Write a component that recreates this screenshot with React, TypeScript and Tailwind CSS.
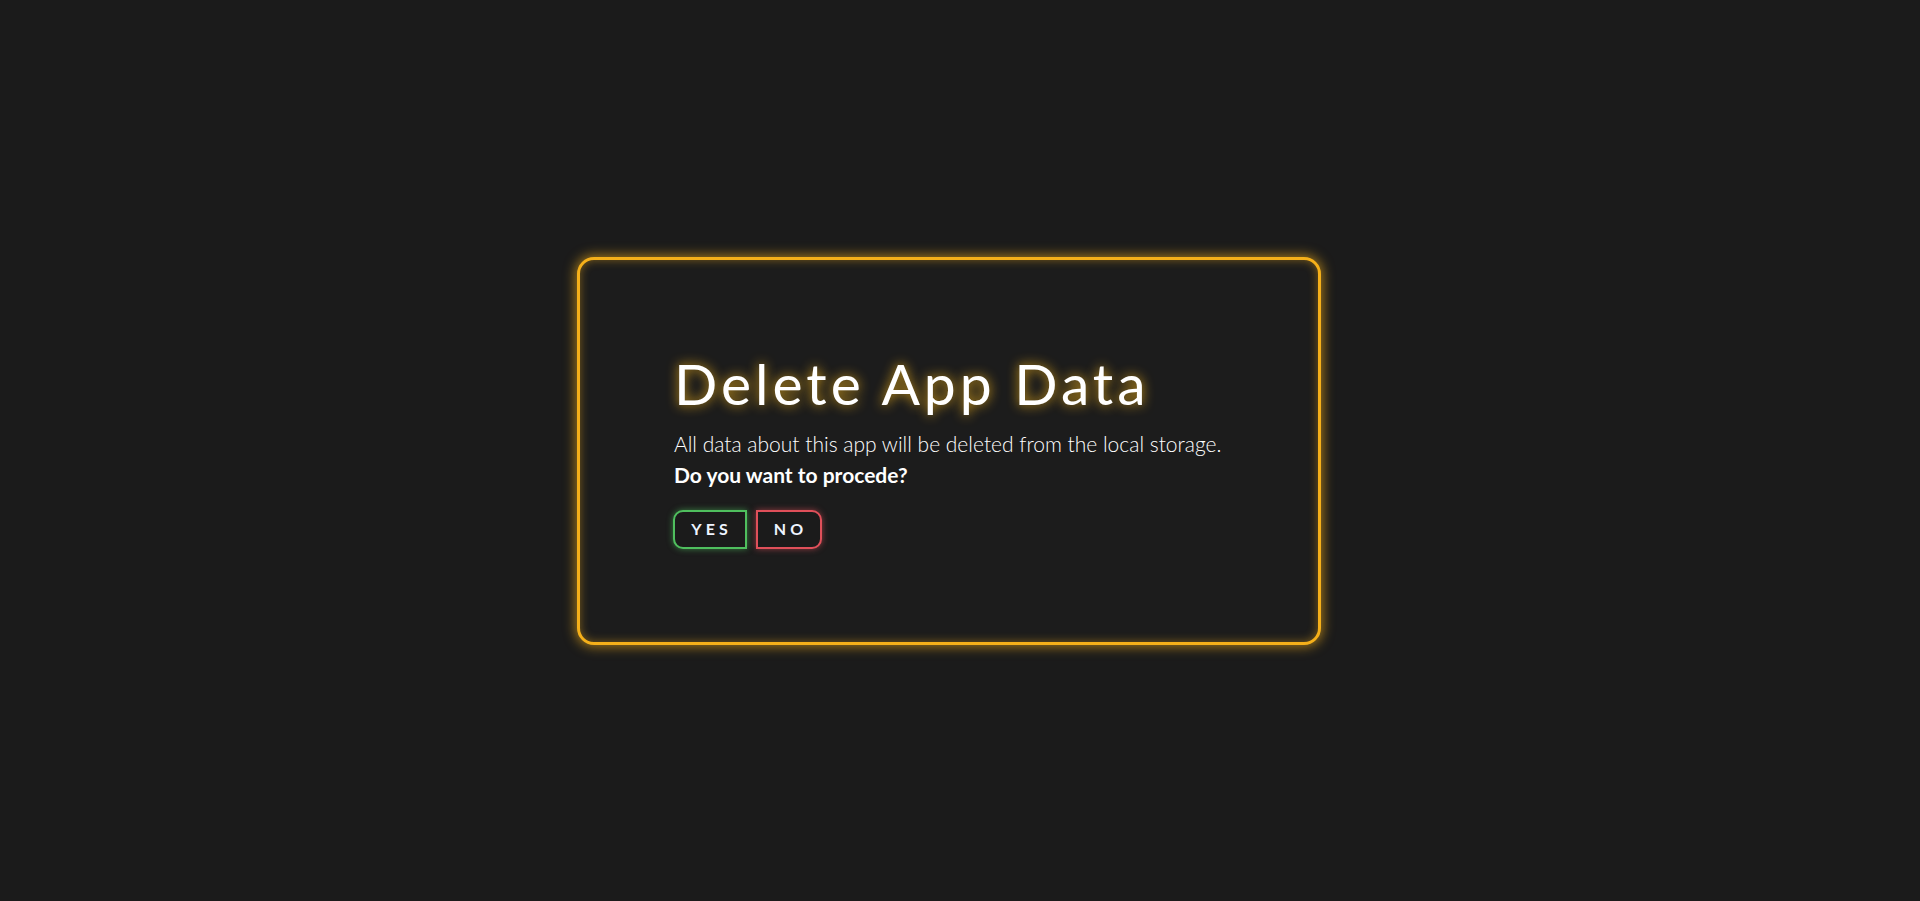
export default function App() {
  return (
    <div className="min-h-screen w-full bg-[#1b1b1b] flex items-center justify-center font-['Lato','Noto_Sans',sans-serif]">
      <div className="mr-[22px] w-[744px] h-[388px] rounded-[17px] border-[3px] border-[#f5b01a] bg-[#1c1c1c] shadow-[0_0_12px_2px_rgba(245,176,26,0.6),inset_0_0_10px_rgba(245,176,26,0.45)] pl-[94px] pr-[60px] pt-[89px]">
        <h1 className="text-[57px] leading-[68px] font-normal tracking-[0.07em] text-white [text-shadow:0_0_12px_rgba(244,180,26,0.9)]">
          Delete App Data
        </h1>
        <p className="mt-[11px] text-[21px] leading-[31px] font-light text-white">
          All data about this app will be deleted from the local storage.
        </p>
        <p className="text-[21px] leading-[31px] font-bold text-white">Do you want to procede?</p>
        <div className="mt-[20px] flex gap-[9px] -ml-[1px]">
          <button className="w-[74px] h-[39px] rounded-l-[10px] border-2 border-[#4fbf5e] bg-[#1b1b1b] text-[16px] font-bold tracking-[0.25em] pl-[3px] text-[#eef4ff] shadow-[0_0_6px_rgba(79,191,94,0.6)]">
            YES
          </button>
          <button className="w-[66px] h-[39px] rounded-r-[10px] border-2 border-[#e0505a] bg-[#1b1b1b] text-[16px] font-bold tracking-[0.25em] pl-[3px] text-[#eef4ff] shadow-[0_0_6px_rgba(224,80,90,0.6)]">
            NO
          </button>
        </div>
      </div>
    </div>
  );
}
